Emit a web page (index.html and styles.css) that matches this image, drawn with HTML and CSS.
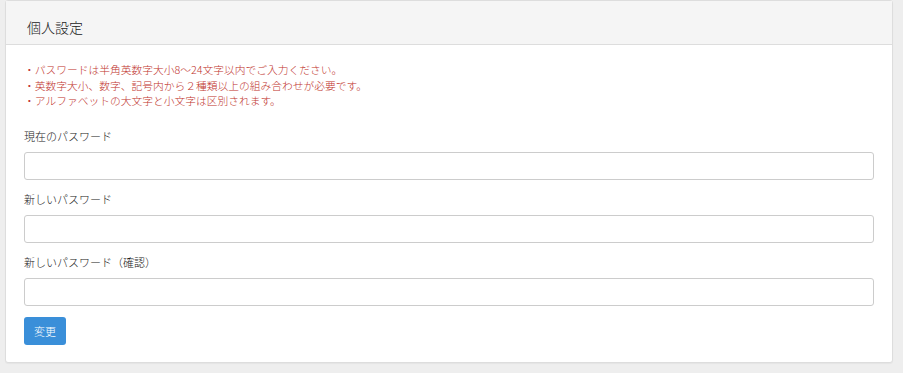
FILE: index.html
```html
<!DOCTYPE html>
<html lang="ja">
<head>
    <meta charset="UTF-8">
    <meta name="viewport" content="width=device-width, initial-scale=1.0">
    <title>個人設定</title>
    <link rel="stylesheet" href="styles.css">
</head>
<body>
    <div class="panel">
        <div class="panel-heading">
            <h3 class="panel-title">個人設定</h3>
        </div>
        <div class="panel-body">
            <div class="notes">
                <p>・パスワードは半角英数字大小8～24文字以内でご入力ください。</p>
                <p>・英数字大小、数字、記号内から２種類以上の組み合わせが必要です。</p>
                <p>・アルファベットの大文字と小文字は区別されます。</p>
            </div>
            <div class="form-group">
                <label for="current">現在のパスワード</label>
                <input type="password" id="current" class="form-control">
            </div>
            <div class="form-group">
                <label for="newpw">新しいパスワード</label>
                <input type="password" id="newpw" class="form-control">
            </div>
            <div class="form-group">
                <label for="confirm">新しいパスワード（確認）</label>
                <input type="password" id="confirm" class="form-control">
            </div>
            <button class="btn-primary">変更</button>
        </div>
    </div>
</body>
</html>
```

FILE: styles.css
```css
body {
  margin: 0;
  padding: 0 10px 10px 5px;
  background-color: #eeeeee;
  font-family: "Noto Sans CJK JP", "Noto Sans", sans-serif;
  color: #333;
}
.panel {
  background: #fff;
  border: 1px solid #dddddd;
  border-radius: 3px;
  box-shadow: 0 1px 1px rgba(0, 0, 0, 0.04);
}
.panel-heading {
  background-color: #f5f5f5;
  border-bottom: 1px solid #dddddd;
  padding: 16px 21px 7px;
}
.panel-title {
  margin: 0;
  font-size: 14px;
  line-height: 20px;
  font-weight: 300;
  color: #222;
}
.panel-body {
  padding: 17px 18px 17px;
}
.notes {
  margin-bottom: 19px;
}
.notes p {
  margin: 0;
  font-size: 10.75px;
  line-height: 15.5px;
  font-weight: 300;
  color: #c0322b;
}
.form-group {
  margin-bottom: 11px;
}
.form-group label {
  display: block;
  font-size: 11px;
  line-height: 16px;
  font-weight: 300;
  margin-bottom: 8px;
  color: #222;
}
.form-control {
  display: block;
  box-sizing: border-box;
  width: 100%;
  height: 28px;
  border: 1px solid #cccccc;
  border-radius: 3px;
  padding: 4px 8px;
  background: #fff;
}
.btn-primary {
  height: 28px;
  width: 42px;
  padding: 0;
  border: none;
  border-radius: 3px;
  background-color: #3a8fd9;
  color: #fff;
  font-family: inherit;
  font-size: 11px;
  font-weight: 300;
}
```
